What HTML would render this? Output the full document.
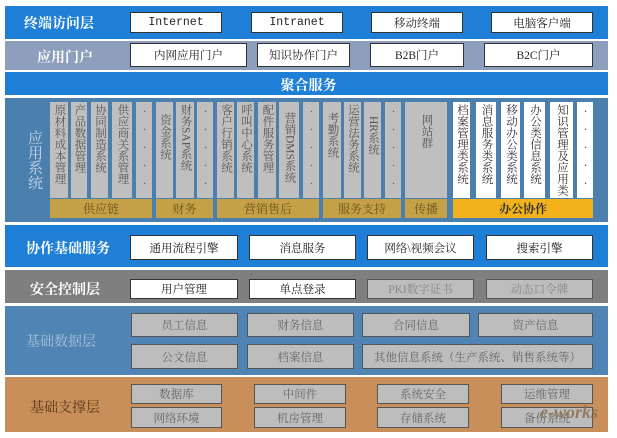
<!DOCTYPE html>
<html><head><meta charset="utf-8"><style>
*{margin:0;padding:0;box-sizing:border-box}
body{width:617px;height:438px;background:#fff;position:relative;overflow:hidden;font-family:"Liberation Serif","Noto Serif CJK SC",serif}
.p{position:absolute;left:5px;width:603px}
.l{position:absolute;color:#fff;font-weight:bold;font-size:14px;white-space:nowrap}
.b{position:absolute;background:#fff;border:1px solid #333;font-size:11.5px;color:#222;display:flex;align-items:center;justify-content:center;white-space:nowrap}
.g{background:#bdbdbd;color:#666;border:1px solid #555}
.c{position:absolute;top:102px;height:96px;background:#bfbfbf;color:#555;font-size:11.5px;line-height:13px;writing-mode:vertical-rl;text-orientation:upright;display:flex;align-items:center;justify-content:flex-start;padding-top:2px}
.m{text-orientation:mixed}
.d{justify-content:center;letter-spacing:6px}
.w{background:#fff;color:#333}
.k{position:absolute;top:199px;height:19px;background:#c4a046;color:#6b5520;font-size:12px;display:flex;align-items:center;justify-content:center}
</style></head><body>
<div class="p" style="top:6px;height:33px;background:#1f7fd6"></div>
<div class="l" style="left:24px;top:13px">终端访问层</div>
<div class="b" style="left:130px;top:12px;width:92px;height:21px;font-family:'Liberation Mono',monospace">Internet</div>
<div class="b" style="left:251px;top:12px;width:92px;height:21px;font-family:'Liberation Mono',monospace">Intranet</div>
<div class="b" style="left:371px;top:12px;width:92px;height:21px">移动终端</div>
<div class="b" style="left:491px;top:12px;width:102px;height:21px">电脑客户端</div>

<div class="p" style="top:41px;height:29px;background:#8d9fbd"></div>
<div class="l" style="left:37px;top:47px">应用门户</div>
<div class="b" style="left:130px;top:43px;width:117px;height:24px">内网应用门户</div>
<div class="b" style="left:257px;top:43px;width:93px;height:24px">知识协作门户</div>
<div class="b" style="left:370px;top:43px;width:94px;height:24px">B2B门户</div>
<div class="b" style="left:484px;top:43px;width:109px;height:24px">B2C门户</div>

<div class="p" style="top:72px;height:23px;background:#1f7fd6"></div>
<div class="l" style="left:0;width:617px;text-align:center;top:75px">聚合服务</div>

<div class="p" style="top:98px;height:124px;background:#4a7fae"></div>
<div style="position:absolute;left:26px;top:130px;color:#c9d6e6;font-size:15px;writing-mode:vertical-rl;line-height:16px">应用系统</div>
<div class="c" style="left:50px;width:18px">原材料成本管理</div>
<div class="c" style="left:71px;width:16px">产品数据管理</div>
<div class="c" style="left:91px;width:17px">协同制造系统</div>
<div class="c" style="left:112px;width:20px">供应商关系管理</div>
<div class="c d" style="left:136px;width:16px">·····</div>
<div class="c" style="left:156px;width:17px;padding-top:12px">资金系统</div>
<div class="c m" style="left:176px;width:18px">财务SAP系统</div>
<div class="c d" style="left:197px;width:16px">·····</div>
<div class="c" style="left:217px;width:17px">客户行销系统</div>
<div class="c" style="left:237px;width:17px">呼叫中心系统</div>
<div class="c" style="left:258px;width:18px">配件服务管理</div>
<div class="c m" style="left:279px;width:20px;padding-top:10px">营销DMS系统</div>
<div class="c d" style="left:303px;width:16px">·····</div>
<div class="c" style="left:323px;width:18px;padding-top:10px">考勤系统</div>
<div class="c" style="left:344px;width:17px">运营法务系统</div>
<div class="c m" style="left:364px;width:17px;padding-top:14px">HR系统</div>
<div class="c d" style="left:385px;width:16px">·····</div>
<div class="c" style="left:405px;width:42px;padding-top:12px">网站群</div>
<div class="c w" style="left:453px;width:17px">档案管理类系统</div>
<div class="c w" style="left:476px;width:20px">消息服务类系统</div>
<div class="c w" style="left:501px;width:19px">移动办公类系统</div>
<div class="c w" style="left:524px;width:21px">办公类信息系统</div>
<div class="c w" style="left:550px;width:23px;overflow:hidden">知识管理及应用类</div>
<div class="c w d" style="left:577px;width:16px">·····</div>
<div class="k" style="left:50px;width:102px">供应链</div>
<div class="k" style="left:156px;width:57px">财务</div>
<div class="k" style="left:217px;width:102px">营销售后</div>
<div class="k" style="left:323px;width:78px">服务支持</div>
<div class="k" style="left:405px;width:42px">传播</div>
<div class="k" style="left:453px;width:140px;background:#f2b21c;color:#333;font-weight:bold">办公协作</div>

<div class="p" style="top:225px;height:42px;background:#1f7fd6"></div>
<div class="l" style="left:26px;top:238px">协作基础服务</div>
<div class="b" style="left:130px;top:235px;width:108px;height:25px">通用流程引擎</div>
<div class="b" style="left:249px;top:235px;width:107px;height:25px">消息服务</div>
<div class="b" style="left:367px;top:235px;width:107px;height:25px">网络\视频会议</div>
<div class="b" style="left:486px;top:235px;width:107px;height:25px">搜索引擎</div>

<div class="p" style="top:270px;height:33px;background:#7f7f7f"></div>
<div class="l" style="left:30px;top:279px">安全控制层</div>
<div class="b" style="left:130px;top:279px;width:108px;height:20px">用户管理</div>
<div class="b" style="left:249px;top:279px;width:107px;height:20px">单点登录</div>
<div class="b g" style="left:367px;top:279px;width:107px;height:20px;color:#888">PKI数字证书</div>
<div class="b g" style="left:486px;top:279px;width:107px;height:20px;color:#888">动态口令牌</div>

<div class="p" style="top:306px;height:69px;background:#4f84b4"></div>
<div class="l" style="left:26px;top:331px;color:#a9c0da;font-weight:normal">基础数据层</div>
<div class="b g" style="left:131px;top:313px;width:107px;height:24px">员工信息</div>
<div class="b g" style="left:247px;top:313px;width:107px;height:24px">财务信息</div>
<div class="b g" style="left:362px;top:313px;width:108px;height:24px">合同信息</div>
<div class="b g" style="left:478px;top:313px;width:115px;height:24px">资产信息</div>
<div class="b g" style="left:131px;top:344px;width:107px;height:25px">公文信息</div>
<div class="b g" style="left:247px;top:344px;width:107px;height:25px">档案信息</div>
<div class="b g" style="left:362px;top:344px;width:231px;height:25px">其他信息系统（生产系统、销售系统等）</div>

<div class="p" style="top:377px;height:55px;background:#c88f5b"></div>
<div class="l" style="left:30px;top:397px;color:#5a3a1a;font-weight:normal">基础支撑层</div>
<div class="b g" style="left:131px;top:384px;width:91px;height:20px">数据库</div>
<div class="b g" style="left:254px;top:384px;width:92px;height:20px">中间件</div>
<div class="b g" style="left:377px;top:384px;width:92px;height:20px">系统安全</div>
<div class="b g" style="left:501px;top:384px;width:92px;height:20px">运维管理</div>
<div class="b g" style="left:131px;top:407px;width:91px;height:21px">网络环境</div>
<div class="b g" style="left:254px;top:407px;width:92px;height:21px">机房管理</div>
<div class="b g" style="left:377px;top:407px;width:92px;height:21px">存储系统</div>
<div class="b g" style="left:501px;top:407px;width:92px;height:21px">备份系统</div>
<div style="position:absolute;left:540px;top:402px;font:italic bold 18px 'Liberation Serif',serif;color:#8a6a4a;opacity:.8">e-works</div>
</body></html>
